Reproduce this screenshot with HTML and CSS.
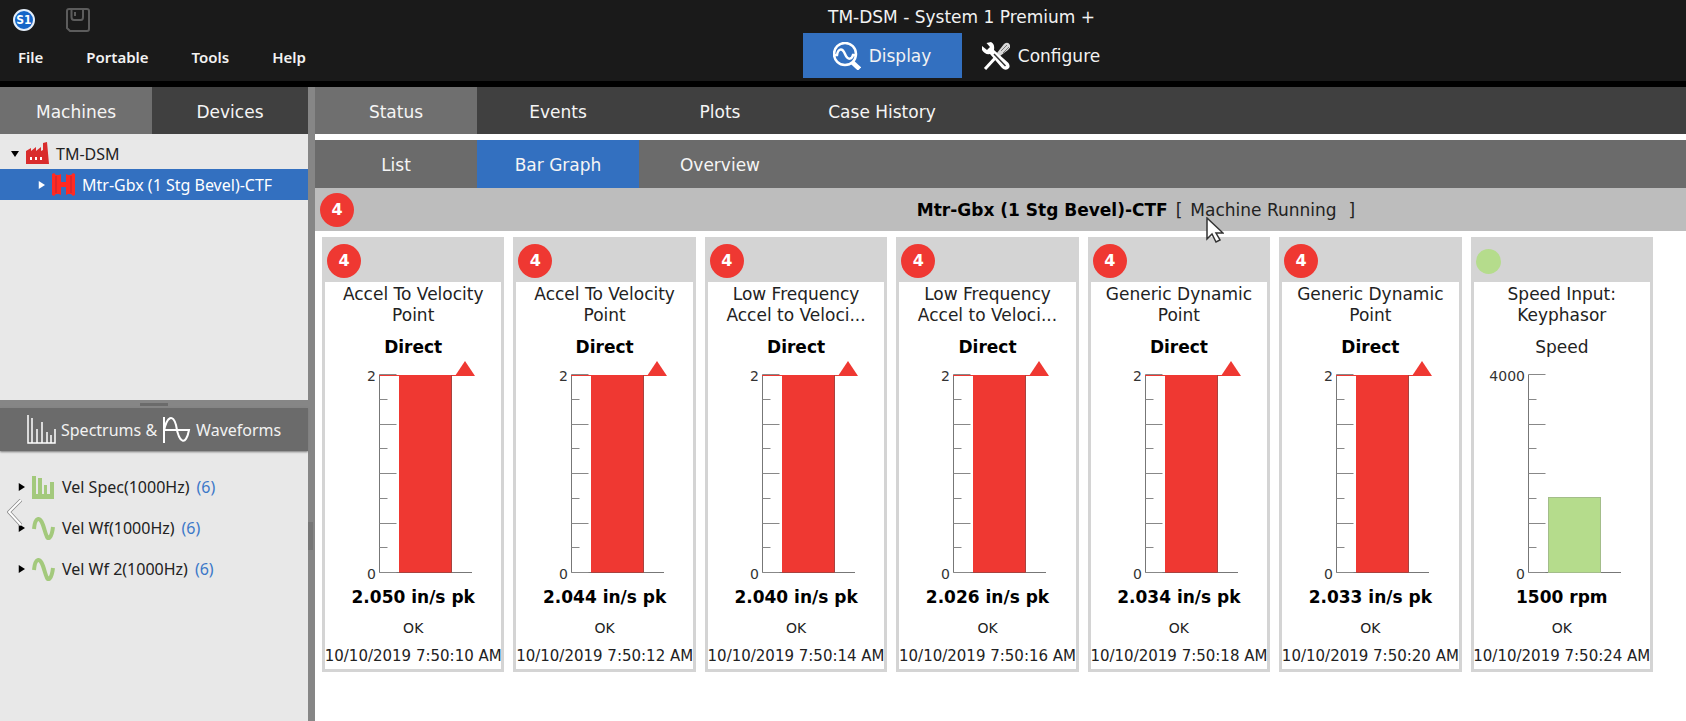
FILE: index.html
```html
<!DOCTYPE html>
<html lang="en">
<head>
<meta charset="utf-8">
<title>TM-DSM - System 1 Premium +</title>
<link rel="stylesheet" href="styles.css">
</head>
<body>
<header class="app-header">
  <div class="header-left">
    <div class="quick-bar">
      <svg class="logo" viewBox="0 0 22 22" role="img" aria-label="System 1"><circle cx="11" cy="11" r="10" fill="#1565c8" stroke="#e4eefa" stroke-width="2"/><text x="11" y="15" text-anchor="middle" class="logo-text">S1</text></svg>
      <button class="icon-button" aria-label="Save"><svg class="save-icon" viewBox="0 0 24 24" fill="none" stroke="#5c5c5c" stroke-width="2"><path d="M1 3Q1 1 3 1H21Q23 1 23 3V21Q23 23 21 23H4L1 20ZM5.500 1V9Q5.500 12 8 12H15Q17 12 17 9V1M9 4V8"/></svg></button>
    </div>
    <nav class="menu">
      <button>File</button><button>Portable</button><button>Tools</button><button>Help</button>
    </nav>
  </div>
  <div class="header-center">
    <h1 class="app-title">TM-DSM - System 1 Premium +</h1>
    <div class="modes">
      <button class="mode mode-active">
        <svg class="mode-icon" viewBox="0 0 28 28" fill="none" stroke="#fff"><circle cx="12" cy="12" r="11" stroke-width="2.500"/><path d="M19 20L26.500 27" stroke-width="4.500"/><path d="M1 13H4C5 7 9 5 12 12S19 17 20 13H23" stroke-width="2.500"/></svg>
        Display
      </button>
      <button class="mode">
        <svg class="mode-icon" viewBox="0 0 28 28"><path d="M3 27L15 14" stroke="#fff" stroke-width="3"/><path d="M15 11L22 2Q26 -1 28 3Q29 5 26 8L18 14Z" fill="#d8d8d8"/><path d="M19 9L25 3M21 11L27 5" stroke="#777" stroke-width="1"/><path d="M4.500 1L9 0Q13 2 12 8L26.500 21Q29 25 26 27Q23 29 20 26L8 12Q3 13 0 8L0 4L5 8L8 5Z" fill="#fff"/><path d="M12 12L23.500 24" stroke="#333" stroke-width="1.500"/></svg>
        Configure
      </button>
    </div>
  </div>
</header>
<div class="workspace">
  <aside class="sidebar">
    <div class="side-tabs" role="tablist">
      <button class="tab tab-active" role="tab" aria-selected="true">Machines</button>
      <button class="tab" role="tab" aria-selected="false">Devices</button>
    </div>
    <ul class="tree">
      <li class="tree-row">
        <svg class="arrow" viewBox="0 0 9 9"><path d="M0 1H9L4.500 8Z"/></svg>
        <svg class="tree-icon" viewBox="0 0 23 23"><path d="M0 22V9L5 6V9L10 5V9L15 5V9L17 8V1L21 0L23 22Z" fill="#d92c2c"/><path d="M5 18V15M10 18V15M15 18V15" stroke="#fff" stroke-width="2"/></svg>
        <span>TM-DSM</span>
      </li>
      <li class="tree-row tree-child tree-selected">
        <svg class="arrow" viewBox="0 0 9 9"><path d="M2 0V9L9 4.500Z"/></svg>
        <svg class="tree-icon" viewBox="0 0 23 23"><path d="M0 1L2 0L4 2H7L9 1V9H14V1L16 2H19L21 0L23 1V22L21 23L19 21H16L14 22V14H9V22L7 21H4L2 23L0 22Z" fill="#ff2a22"/><path d="M4 3V20M19 3V20" stroke="#bd2434" stroke-width="1"/></svg>
        <span>Mtr-Gbx (1 Stg Bevel)-CTF</span>
      </li>
    </ul>
    <div class="h-splitter"></div>
    <h2 class="signals-head">
      <svg class="signals-icon" viewBox="0 0 29 29" fill="none" stroke="#fff" stroke-width="1.500"><path d="M1 0V28H28V14M5 3V28M10 14V28M15 7V28M20 17V28M24 20V28"/></svg>
      <span>Spectrums &amp;</span>
      <svg class="signals-icon" viewBox="0 0 29 29" fill="none" stroke="#fff" stroke-width="2"><path d="M2 2V28M2 16C5 1 11 -1 14 10C17 29 24 31 27 15H2"/></svg>
      <span class="waveforms">Waveforms</span>
    </h2>
    <ul class="signals">
      <li><svg class="arrow" viewBox="0 0 9 9"><path d="M2 0V9L9 4.500Z"/></svg><svg class="tree-icon" viewBox="0 0 23 23"><path d="M0 0H4V18H6V2H10V18H12V9H15V18H18V6H22V23H0Z" fill="#a3c97c"/></svg><span>Vel Spec(1000Hz)</span><a class="count" href="#spec">(6)</a></li>
      <li><svg class="arrow" viewBox="0 0 9 9"><path d="M2 0V9L9 4.500Z"/></svg><svg class="tree-icon" viewBox="0 0 23 23" fill="none" stroke="#a3c97c" stroke-width="4"><path d="M2 12C3 0 8 -1 11 8S15 24 18 20Q20 18 21 10"/></svg><span>Vel Wf(1000Hz)</span><a class="count" href="#wf">(6)</a></li>
      <li><svg class="arrow" viewBox="0 0 9 9"><path d="M2 0V9L9 4.500Z"/></svg><svg class="tree-icon" viewBox="0 0 23 23" fill="none" stroke="#a3c97c" stroke-width="4"><path d="M2 12C3 0 8 -1 11 8S15 24 18 20Q20 18 21 10"/></svg><span>Vel Wf 2(1000Hz)</span><a class="count" href="#wf2">(6)</a></li>
    </ul>
    <button class="collapse" aria-label="Previous"><svg viewBox="0 0 15 28" fill="none"><path d="M14 1L2 13L14 26" stroke="#8a8a8a" stroke-width="3.500"/><path d="M14 1L2 13L14 26" stroke="#fff" stroke-width="2"/></svg></button>
  </aside>
  <div class="v-splitter"></div>
  <main class="main">
    <nav class="tabs">
      <button class="tab tab-active">Status</button><button class="tab">Events</button><button class="tab">Plots</button><button class="tab">Case History</button>
    </nav>
    <nav class="tabs subtabs">
      <button class="tab">List</button><button class="tab tab-selected">Bar Graph</button><button class="tab">Overview</button>
    </nav>
    <div class="machine-bar">
      <span class="badge">4</span>
      <div class="machine-state"><strong>Mtr-Gbx (1 Stg Bevel)-CTF</strong><span>[</span><span class="running">Machine Running<svg class="cursor" viewBox="0 0 18 27"><path d="M1 1V22L6 17L10 25L14 23L10 16H17Z" fill="#fff" stroke="#333" stroke-width="1.500"/></svg></span><span>]</span></div>
    </div>
    <section class="cards" id="cards"></section>
  </main>
</div>
<script src="cards.js"></script>
</body>
</html>
```
FILE: cards.js
```javascript
const points = [
  ["Accel To Velocity", "Point", "2.050 in/s pk", "10"],
  ["Accel To Velocity", "Point", "2.044 in/s pk", "12"],
  ["Low Frequency", "Accel to Veloci...", "2.040 in/s pk", "14"],
  ["Low Frequency", "Accel to Veloci...", "2.026 in/s pk", "16"],
  ["Generic Dynamic", "Point", "2.034 in/s pk", "18"],
  ["Generic Dynamic", "Point", "2.033 in/s pk", "20"],
  ["Speed Input:", "Keyphasor", "1500 rpm", "24"]
];

// Scale runs from y=15 (maximum) to y=213 (zero).
function chart(speed) {
  let ticks = "";
  for (let i = 0; i <= 8; i++) {
    const y = Math.round(15 + i * 24.75) + 0.5;
    ticks += `M54.5 ${y}h${i % 2 ? 8 : 17}`;
  }
  const bar = speed
    ? '<rect x="74.5" y="138.5" width="52" height="75" fill="#b5dc8c" stroke="#a3bd8a"/>'
    : '<path d="M54 16.500H142" stroke="#ef3832" stroke-width="1"/><rect x="74" y="16" width="52" height="198" fill="#ef3832"/><path d="M126.500 16V213.500H74" fill="none" stroke="#a8423e"/><path d="M130 17L140 2L150 17Z" fill="#ef3832"/>';
  return `<svg class="chart" viewBox="0 0 176 226">
    <path d="M54.5 15.500V213.500H147" fill="none" stroke="#777"/>
    <path d="${ticks}" stroke="#888"/>${bar}
    <text x="51" y="22" text-anchor="end">${speed ? "4000" : "2"}</text>
    <text x="51" y="220" text-anchor="end">0</text></svg>`;
}

document.getElementById("cards").innerHTML = points.map(([a, b, value, sec], i) => {
  const speed = i === 6;
  return `<article class="card">
    <div class="card-head">${speed ? '<span class="ok-dot"></span>' : '<span class="badge">4</span>'}</div>
    <h3 class="card-title">${a}<br>${b}</h3>
    <p class="measure${speed ? "" : " alarm"}">${speed ? "Speed" : "Direct"}</p>
    ${chart(speed)}
    <p class="value">${value}</p>
    <p class="state">OK</p>
    <p class="time">10/10/2019 7:50:${sec} AM</p>
  </article>`;
}).join("");
```
FILE: styles.css
```css
* { box-sizing: border-box; }
body { margin: 0; min-height: 100vh; display: flex; flex-direction: column; background: #fff; color: #222; font: 17px/24px "DejaVu Sans", sans-serif; }
button { border: 0; padding: 0; background: none; color: inherit; font: inherit; }
h1, h2, h3, p, ul { margin: 0; padding: 0; font-weight: normal; font-size: inherit; list-style: none; }
svg { display: block; flex: none; }

.app-header { display: flex; height: 87px; background: #1a1a1a; border-bottom: 6px solid #000; color: #f2f2f2; }
.header-left { width: 47.6%; padding-top: 8px; }
.quick-bar { display: flex; gap: 31px; padding-left: 13px; align-items: center; }
.logo { width: 22px; height: 22px; }
.logo-text { font: bold 12px "DejaVu Sans Condensed", sans-serif; fill: #fff; }
.save-icon { width: 24px; height: 24px; }
.menu { display: flex; gap: 43px; padding: 13px 0 0 18px; font: 600 15px/24px "Noto Sans", sans-serif; }
.header-center { display: flex; flex-direction: column; align-items: center; padding-top: 5px; }
.app-title { line-height: 24px; }
.modes { display: flex; margin-top: 4px; }
.mode { display: flex; align-items: center; justify-content: center; gap: 8px; width: 159px; height: 45px; }
.mode-active { background: #3370c0; }
.mode-icon { width: 28px; height: 28px; }

.workspace { flex: 1; display: flex; }
.sidebar { position: relative; width: 308px; flex: none; background: #e8e8e8; font: 16px/24px "Noto Sans", sans-serif; }
.side-tabs { display: grid; grid-template-columns: 152fr 156fr; height: 47px; background: #404040; font: 17px/24px "DejaVu Sans", sans-serif; }
.tab { padding-top: 2px; color: #f5f5f5; }
.tab-active { background: #6f6f6f; }
.tab-selected { background: #3370c0; }
.tree { height: 266px; padding-top: 4px; }
.tree-row { display: flex; align-items: center; gap: 7px; height: 31px; padding-left: 11px; }
.tree-child { padding-left: 37px; }
.tree-selected { background: #3370c0; color: #fff; }
.arrow { width: 8px; height: 8px; fill: #000; }
.tree-selected .arrow { fill: #fff; }
.tree-icon { width: 23px; height: 23px; }
.h-splitter { height: 8px; display: flex; justify-content: center; align-items: center; background: #868686; }
.h-splitter::after { content: ""; width: 28px; height: 3px; background: #6b6b6b; }
.signals-head { display: flex; align-items: center; height: 43px; gap: 5px; padding-left: 27px; background: #6b6b6b; color: #f2f2f2; box-shadow: 0 1px 2px #777; }
.signals-icon { width: 29px; height: 29px; }
.signals { display: flex; flex-direction: column; gap: 17px; padding: 24px 0 0 17px; }
.signals li { display: flex; align-items: center; gap: 7px; }
.count { color: #3c78c8; text-decoration: none; }
.collapse { position: absolute; left: 7px; top: 412px; width: 15px; height: 28px; }
.v-splitter { display: flex; align-items: center; width: 7px; flex: none; background: #868686; }
.v-splitter::after { content: ""; width: 5px; height: 28px; margin-top: 264px; background: #777; }

.main { flex: 1; min-width: 0; }
.tabs { display: flex; height: 47px; background: #404040; }
.tabs .tab { width: 162px; }
.subtabs { height: 48px; margin-top: 6px; background: #6b6b6b; }
.machine-bar { display: flex; align-items: center; height: 43px; padding-left: 5px; background: #bdbdbd; }
.badge { display: grid; place-items: center; width: 34px; height: 34px; border-radius: 50%; background: #ef3832; color: #fff; font: bold 16px/24px "DejaVu Sans", sans-serif; }
.machine-state { flex: 1; display: flex; gap: 8px; padding-left: 41.2%; color: #222; }
.machine-state strong { color: #000; }
.running { position: relative; padding-right: 4px; }
.cursor { position: absolute; left: 16px; top: 19px; width: 18px; height: 27px; }

.cards { display: grid; grid-template-columns: repeat(7, 1fr); gap: 9px; padding: 6px 33px 0 7px; }
.card { display: flex; flex-direction: column; align-items: center; min-width: 0; padding-bottom: 3px; border: 3px solid #d4d4d4; border-top: 0; white-space: nowrap; }
.card-head { align-self: stretch; display: flex; align-items: center; height: 45px; padding: 3px 0 0 2px; background: #d4d4d4; }
.ok-dot { width: 25px; height: 25px; border-radius: 50%; background: #b5dc8c; }
.card-title { padding-top: 2px; line-height: 21px; text-align: center; }
.measure { margin-top: 9px; }
.alarm { font-weight: bold; color: #000; }
.chart { width: 176px; height: 226px; font: 14px "DejaVu Sans", sans-serif; fill: #333; }
.value { font-weight: bold; color: #000; }
.state { margin-top: 9px; font-size: 14px; line-height: 20px; }
.time { margin-top: 8px; font-size: 15px; line-height: 20px; }
```
